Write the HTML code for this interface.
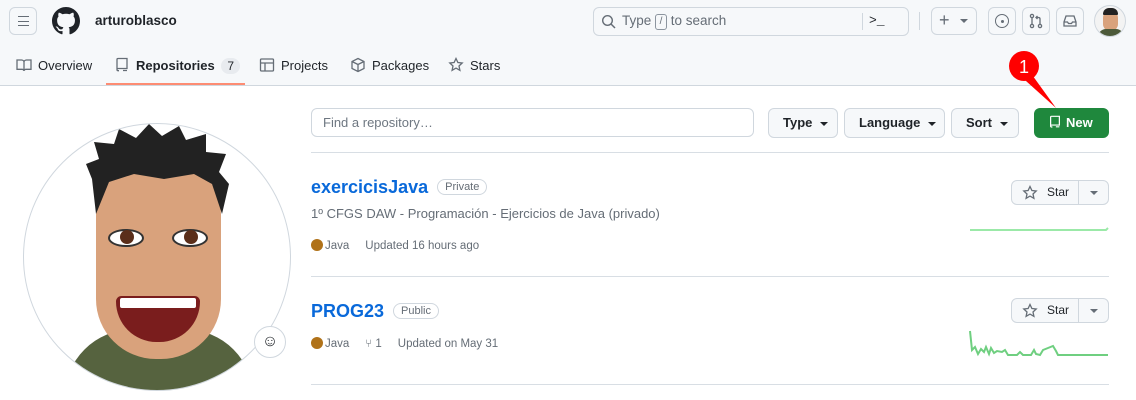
<!DOCTYPE html>
<html><head><meta charset="utf-8"><style>
*{box-sizing:border-box;margin:0;padding:0}
body{width:1136px;height:400px;overflow:hidden;background:#fff;font-family:"Liberation Sans",sans-serif;color:#1f2328;position:relative}
.hdr{position:absolute;left:0;top:0;width:1136px;height:86px;background:#f6f8fa;border-bottom:1px solid #d0d7de}
.a{position:absolute}
.btn{position:absolute;border:1px solid #d0d7de;border-radius:6px;background:#f6f8fa}
.ib{position:absolute;border:1px solid #d0d7de;border-radius:6px;width:28px;height:28px;top:7px;background:#f6f8fa}
.tab{position:absolute;top:57px;font-size:13px;color:#1f2328}
.sel{position:absolute;top:108px;height:30px;border:1px solid #d0d7de;border-radius:6px;background:#f6f8fa;font-size:13px;font-weight:bold;line-height:28px;padding-left:14px;color:#1f2328}
.car{display:inline-block;width:0;height:0;border-left:4px solid transparent;border-right:4px solid transparent;border-top:4px solid #1f2328;vertical-align:middle;margin-left:8px}
.repo{position:absolute;left:311px;font-size:18px;font-weight:bold;color:#0969da;white-space:nowrap}
.badge{display:inline-block;vertical-align:3px;margin-left:9px;font-size:11px;font-weight:normal;color:#656d76;border:1px solid #d0d7de;border-radius:12px;padding:1px 7px}
.meta{position:absolute;font-size:11.5px;color:#656d76}
.dot{display:inline-block;width:12px;height:12px;border-radius:50%;background:#b07219;vertical-align:-2px;margin-right:2px}
.hr{position:absolute;left:311px;width:798px;height:1px;background:#d8dee4}
.star{position:absolute;left:1011px;width:98px;height:25px;border:1px solid #d0d7de;border-radius:6px;background:#f6f8fa;font-size:12px}
</style></head><body>
<div class="hdr"></div>
<div class="ib" style="left:9px;top:7px;width:28px;height:28px;background:#f6f8fa"><div class="a" style="left:8px;top:8px;width:11px;height:10px;border-top:1.5px solid #656d76;border-bottom:1.5px solid #656d76"></div><div class="a" style="left:8px;top:12.5px;width:11px;height:1.5px;background:#656d76"></div></div>
<svg class="a" style="left:52px;top:7px" width="28" height="28" viewBox="0 0 16 16"><path fill="#1f2328" d="M8 0C3.58 0 0 3.58 0 8c0 3.54 2.29 6.53 5.47 7.59.4.07.55-.17.55-.38 0-.19-.01-.82-.01-1.490-2.01.37-2.53-.49-2.69-.94-.09-.23-.48-.94-.82-1.130-.28-.15-.68-.52-.01-.53.63-.01 1.08.58 1.23.82.72 1.21 1.87.87 2.33.66.07-.52.28-.87.51-1.07-1.78-.2-3.64-.89-3.64-3.95 0-.87.31-1.59.82-2.15-.08-.2-.36-1.02.08-2.12 0 0 .67-.21 2.2.82.64-.18 1.32-.27 2-.27.68 0 1.36.09 2 .27 1.53-1.04 2.2-.82 2.2-.82.44 1.1.16 1.92.08 2.12.51.56.82 1.27.82 2.15 0 3.07-1.87 3.75-3.65 3.95.29.25.54.73.54 1.48 0 1.07-.01 1.93-.01 2.2 0 .21.15.46.55.38A8.013 8.013 0 0016 8c0-4.42-3.58-8-8-8z"/></svg>
<div class="a" style="left:95px;top:13px;font-size:13.5px;font-weight:bold">arturoblasco</div>
<div class="btn" style="left:593px;top:7px;width:316px;height:29px;background:#f6f8fa"></div>
<svg class="a" style="left:601px;top:14px" width="16" height="16" viewBox="0 0 16 16"><circle cx="6.5" cy="6.5" r="4.8" fill="none" stroke="#656d76" stroke-width="1.4"/><path d="M10 10l4 4" stroke="#656d76" stroke-width="1.5"/></svg>
<div class="a" style="left:622px;top:13px;font-size:13.5px;color:#656d76">Type <span style="display:inline-block;border:1px solid #8c959f;border-radius:3px;width:12px;height:16px;font-size:10px;text-align:center;line-height:14px;vertical-align:1px">/</span> to search</div>
<div class="a" style="left:862px;top:13px;width:1px;height:17px;background:#d0d7de"></div>
<div class="a" style="left:869px;top:13px;font-size:13px;color:#1f2328;font-family:'Liberation Mono',monospace">&gt;_</div>
<div class="a" style="left:919px;top:12px;width:1px;height:18px;background:#d0d7de"></div>
<div class="ib" style="left:931px;width:46px"><div class="a" style="left:7px;top:2px;font-size:18px;color:#656d76">+</div><div class="a" style="left:28px;top:11px;border-left:4px solid transparent;border-right:4px solid transparent;border-top:4px solid #656d76"></div></div>
<div class="ib" style="left:988px"><div class="a" style="left:6px;top:6px;width:14px;height:14px;border:1.5px solid #656d76;border-radius:50%"></div><div class="a" style="left:11.5px;top:11.5px;width:3px;height:3px;background:#656d76;border-radius:50%"></div></div>
<div class="ib" style="left:1022px"><svg class="a" style="left:5px;top:5px" width="16" height="16" viewBox="0 0 16 16" fill="none" stroke="#656d76" stroke-width="1.3"><circle cx="4" cy="3" r="1.6"/><circle cx="4" cy="13" r="1.6"/><circle cx="12" cy="13" r="1.6"/><path d="M4 4.6v6.8M12 11.4V6c0-1-.5-1.5-1.5-1.5H8M9.5 3l-1.5 1.5L9.5 6"/></svg></div>
<div class="ib" style="left:1056px"><svg class="a" style="left:5px;top:5px" width="16" height="16" viewBox="0 0 16 16" fill="none" stroke="#656d76" stroke-width="1.3"><path d="M2 9l2-6h8l2 6v4H2zM2 9h3.5l1 1.5h3l1-1.5H14"/></svg></div>
<div class="a" style="left:1094px;top:5px;width:32px;height:32px;border-radius:50%;background:#f3f3f3;border:1px solid #d0d7de;overflow:hidden"><div class="a" style="left:8px;top:5px;width:15px;height:20px;background:#d9a27c;border-radius:7px"></div><div class="a" style="left:8px;top:2px;width:15px;height:7px;background:#222;border-radius:6px 6px 1px 1px"></div><div class="a" style="left:3px;top:23px;width:26px;height:10px;background:#4d5a3a;border-radius:8px 8px 0 0"></div></div>

<div class="tab" style="left:16px"><svg style="vertical-align:-3px;margin-right:6px" width="16" height="16" viewBox="0 0 16 16" fill="none" stroke="#656d76" stroke-width="1.3"><path d="M1 3h4.5c1.4 0 2.5 1 2.5 2.3V14c0-1-1-1.7-2-1.7H1zM15 3h-4.5C9.1 3 8 4 8 5.3V14c0-1 1-1.7 2-1.7H15z"/></svg>Overview</div>
<div class="tab" style="left:114px;font-weight:bold"><svg style="vertical-align:-3px;margin-right:6px" width="16" height="16" viewBox="0 0 16 16" fill="none" stroke="#656d76" stroke-width="1.3"><path d="M3 12.5V2.5c0-.6.4-1 1-1h9v10H4.2c-.7 0-1.2.5-1.2 1.1s.5 1.1 1.2 1.1H5M9 13.5h4"/></svg>Repositories <span style="display:inline-block;background:#e8ebef;border-radius:10px;padding:1px 6px;font-size:12px;font-weight:normal;margin-left:3px">7</span></div>
<div class="a" style="left:106px;top:83px;width:139px;height:2px;background:#fd8c73"></div>
<div class="tab" style="left:259px"><svg style="vertical-align:-3px;margin-right:6px" width="16" height="16" viewBox="0 0 16 16" fill="none" stroke="#656d76" stroke-width="1.3"><rect x="1.5" y="2" width="13" height="12" rx="1"/><path d="M1.5 6h13M6 6v8"/></svg>Projects</div>
<div class="tab" style="left:350px"><svg style="vertical-align:-3px;margin-right:6px" width="16" height="16" viewBox="0 0 16 16" fill="none" stroke="#656d76" stroke-width="1.3"><path d="M8 1.5l6 3v7l-6 3-6-3v-7zM2 4.5l6 3 6-3M8 7.5v7"/></svg>Packages</div>
<div class="tab" style="left:448px"><svg style="vertical-align:-3px;margin-right:6px" width="16" height="16" viewBox="0 0 16 16" fill="none" stroke="#656d76" stroke-width="1.3"><path d="M8 1.5l1.9 4 4.3.5-3.2 3 .9 4.3L8 11.1l-3.9 2.2.9-4.3-3.2-3 4.3-.5z"/></svg>Stars</div>

<!-- avatar -->
<div class="a" style="left:23px;top:123px;width:268px;height:268px;border-radius:50%;border:1px solid #d0d7de;background:#fff;overflow:hidden">
<div class="a" style="left:40px;top:205px;width:190px;height:90px;background:#56633f;border-radius:70px 70px 0 0"></div>
<div class="a" style="left:72px;top:35px;width:125px;height:200px;background:#d9a27c;border-radius:55px 55px 60px 60px"></div>
<svg class="a" style="left:60px;top:0" width="150" height="95" viewBox="0 0 150 95"><path d="M12 90 L8 55 L2 40 L15 35 L10 18 L30 20 L35 5 L52 14 L65 0 L78 12 L95 2 L102 16 L122 10 L122 28 L142 30 L135 48 L145 60 L138 90 L128 60 L110 50 L80 55 L50 50 L25 58 Z" fill="#222"/></svg>
<div class="a" style="left:84px;top:105px;width:36px;height:18px;background:#fff;border-radius:50%;border:2px solid #333"></div>
<div class="a" style="left:148px;top:105px;width:36px;height:18px;background:#fff;border-radius:50%;border:2px solid #333"></div>
<div class="a" style="left:96px;top:106px;width:14px;height:14px;background:#5a2e1a;border-radius:50%"></div>
<div class="a" style="left:160px;top:106px;width:14px;height:14px;background:#5a2e1a;border-radius:50%"></div>
<div class="a" style="left:92px;top:172px;width:84px;height:46px;background:#7a1d1d;border-radius:6px 6px 44px 44px"></div>
<div class="a" style="left:96px;top:174px;width:76px;height:10px;background:#fff;border-radius:2px"></div>
</div>
<div class="a" style="left:254px;top:326px;width:32px;height:32px;border-radius:50%;border:1px solid #d0d7de;background:#fff;font-size:16px;text-align:center;line-height:30px;color:#1f2328">☺</div>

<div class="a" style="left:311px;top:108px;width:443px;height:29px;border:1px solid #d0d7de;border-radius:6px;font-size:13px;color:#6e7781;padding:6px 11px">Find a repository…</div>
<div class="sel" style="left:768px;width:70px">Type<span class="car"></span></div>
<div class="sel" style="left:844px;width:101px">Language<span class="car"></span></div>
<div class="sel" style="left:951px;width:68px">Sort<span class="car"></span></div>
<div class="a" style="left:1034px;top:108px;width:75px;height:30px;background:#1f883d;border-radius:6px;color:#fff;font-size:13px;font-weight:bold;line-height:30px;padding-left:14px"><svg style="vertical-align:-3px;margin-right:4px" width="14" height="16" viewBox="0 0 16 16" fill="none" stroke="#fff" stroke-width="1.4"><path d="M3 12.5V2.5c0-.6.4-1 1-1h9v10H4.2c-.7 0-1.2.5-1.2 1.1s.5 1.1 1.2 1.1H5M9 13.5h4"/></svg>New</div>
<!-- annotation -->
<svg class="a" style="left:1000px;top:44px" width="70" height="70" viewBox="0 0 70 70"><path d="M16 28 L30 28 L56 64 Z" fill="#f00"/><circle cx="24" cy="22" r="15" fill="#f00"/><text x="24" y="29" font-size="18" fill="#fff" text-anchor="middle" font-family="Liberation Sans">1</text></svg>

<div class="hr" style="top:152px"></div>
<div class="repo" style="top:177px">exercicisJava<span class="badge">Private</span></div>
<div class="a" style="left:311px;top:206px;font-size:13px;color:#656d76">1º CFGS DAW - Programación - Ejercicios de Java (privado)</div>
<div class="meta" style="left:311px;top:239px"><span class="dot"></span>Java<span style="margin-left:16px">Updated 16 hours ago</span></div>
<div class="star" style="top:180px"><svg class="a" style="left:10px;top:4px" width="16" height="16" viewBox="0 0 16 16" fill="none" stroke="#656d76" stroke-width="1.3"><path d="M8 1.5l1.9 4 4.3.5-3.2 3 .9 4.3L8 11.1l-3.9 2.2.9-4.3-3.2-3 4.3-.5z"/></svg><span class="a" style="left:35px;top:4px">Star</span><div class="a" style="left:66px;top:0;width:1px;height:23px;background:#d0d7de"></div><div class="a" style="left:78px;top:10px;border-left:4px solid transparent;border-right:4px solid transparent;border-top:4px solid #656d76"></div></div>
<svg class="a" style="left:969px;top:225px" width="140" height="10"><path d="M1 5H137L139 3" stroke="#9be9a8" stroke-width="2" fill="none"/></svg>

<div class="hr" style="top:276px"></div>
<div class="repo" style="top:301px">PROG23<span class="badge">Public</span></div>
<div class="meta" style="left:311px;top:337px"><span class="dot"></span>Java<span style="margin-left:16px">⑂ 1</span><span style="margin-left:16px">Updated on May 31</span></div>
<div class="star" style="top:298px"><svg class="a" style="left:10px;top:4px" width="16" height="16" viewBox="0 0 16 16" fill="none" stroke="#656d76" stroke-width="1.3"><path d="M8 1.5l1.9 4 4.3.5-3.2 3 .9 4.3L8 11.1l-3.9 2.2.9-4.3-3.2-3 4.3-.5z"/></svg><span class="a" style="left:35px;top:4px">Star</span><div class="a" style="left:66px;top:0;width:1px;height:23px;background:#d0d7de"></div><div class="a" style="left:78px;top:10px;border-left:4px solid transparent;border-right:4px solid transparent;border-top:4px solid #656d76"></div></div>
<svg class="a" style="left:969px;top:330px" width="140" height="28"><path d="M1 1L3 20 6 17 9 24 12 19 15 22 17 17 20 24 22 18 25 23 28 21 33 22 36 20 39 25 48 25 51 22 54 25 62 25 65 20 67 24 71 25 74 20 79 18 84 16 87 21 89 25 139 25" stroke="#6fcf80" stroke-width="2" fill="none"/></svg>
<div class="hr" style="top:384px"></div>
</body></html>
